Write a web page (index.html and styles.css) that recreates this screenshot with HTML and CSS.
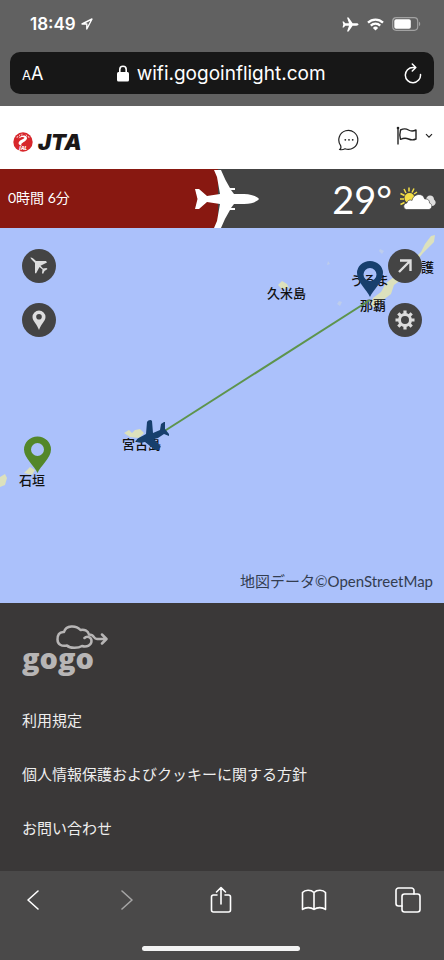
FILE: index.html
```html
<!DOCTYPE html>
<html lang="ja">
<head>
<meta charset="utf-8">
<meta name="viewport" content="width=device-width, initial-scale=1">
<title>JTA Wi-Fi</title>
<link rel="stylesheet" href="styles.css">
</head>
<body>
<div class="browser-top">
  <div class="status">
    <div class="status-group">
      <span class="clock">18:49</span>
      <svg width="12" height="12" viewBox="0 0 12 12" fill="none" stroke="#fff" stroke-width="1.4" stroke-linejoin="round"><path d="M11 1 1 6h4.800v5z"/></svg>
    </div>
    <div class="status-group status-right">
      <svg width="17" height="15" viewBox="0 0 17 15" fill="#fff"><path d="M16.500 7.500c0-.7-1-1.200-2.200-1.200H10.600L6.600.5H5l2 5.800H3.300L1.700 4.400H.5l.8 3.100-.8 3.100h1.200l1.600-1.900H7l-2 5.800h1.600l4-5.800h3.700c1.200 0 2.200-.5 2.200-1.200z"/></svg>
      <svg width="17" height="13" viewBox="0 0 17 13" fill="none" stroke="#fff" stroke-width="2.300"><path d="M1 4.600a10.800 10.800 0 0 1 15 0M3.800 7.600a6.700 6.700 0 0 1 9.400 0"/><path d="M8.500 12.500 5.900 9.900a3.700 3.700 0 0 1 5.200 0z" fill="#fff" stroke="none"/></svg>
      <svg width="29" height="14" viewBox="0 0 29 14"><rect x=".7" y=".7" width="25" height="12.600" rx="3.500" fill="none" stroke="#a2a2a2" stroke-width="1.200"/><rect x="2.300" y="2.300" width="16.500" height="9.400" rx="1.800" fill="#fff"/><path d="M27 4.800c1.600.5 1.600 3.900 0 4.400z" fill="#a2a2a2"/></svg>
    </div>
  </div>
  <div class="address">
    <button class="text-size" aria-label="文字サイズ"><span class="small-a">A</span>A</button>
    <label class="site">
      <svg width="12" height="17" viewBox="0 0 12 17"><rect y="7" width="12" height="9.500" rx="1.500" fill="#fff"/><path d="M2.800 8V4.500a3.200 3.200 0 0 1 6.400 0V8" fill="none" stroke="#fff" stroke-width="1.600"/></svg>
      <input class="url" type="text" value="wifi.gogoinflight.com" aria-label="アドレス">
    </label>
    <button class="reload" aria-label="再読み込み"><svg width="18" height="21" viewBox="0 0 18 21" fill="none" stroke="#fff" stroke-width="1.500" stroke-linecap="round" stroke-linejoin="round"><path d="M16.500 11.500A7.600 7.600 0 1 1 9 4.500h2.500M8.300 1l3.500 3.500L8.300 8"/></svg></button>
  </div>
</div>

<header class="site-header">
  <a class="brand" href="#" aria-label="JTA">
    <svg width="20" height="20" viewBox="0 0 20 20"><circle cx="10" cy="10" r="9.700" fill="#d7262b"/><path d="M7 2.500 6 4.500M9 1.700l-.3 2M13 2.500l1 2M4.500 4 4 6M15.500 4l.5 2" stroke="#fff" stroke-width=".7"/><path d="M5.500 6.500C7.500 3.200 12 2.700 13.600 5c1.500 2.300-1.200 4-3.900 5.700-1.700 1.200-1.900 2-.7 3-3.500-.3-4.500-3-2-5 2.200-1.500 4.800-1.900 4.300-3.100C10.600 4.400 7.500 5 5.500 6.500z" fill="#fff"/><text class="crest" x="10" y="17.500" text-anchor="middle">JAL</text></svg>
    <span>JTA</span>
  </a>
  <nav class="header-actions">
    <button aria-label="チャット"><svg width="22" height="22" viewBox="0 0 22 22"><path d="M1.500 20.500c1.500-.6 1.700-2.300 1-4.200A9.500 9.500 0 1 1 7 19.800c-1.700.9-3.500 1.200-5.500.7z" fill="none" stroke="#222" stroke-width="1.200" stroke-linejoin="round"/><g fill="#222"><circle cx="7.300" cy="10.800" r=".9"/><circle cx="11" cy="10.800" r=".9"/><circle cx="14.700" cy="10.800" r=".9"/></g></svg></button>
    <button class="language" aria-label="言語"><svg width="22" height="20" viewBox="0 0 22 20" fill="none" stroke="#222" stroke-width="1.400"><path d="M2 2v16.500"/><circle cx="2" cy="2" r="1.300" fill="#222" stroke="none"/><path d="M4.500 4c3-1.500 5.500-1.500 8 0s5 1.200 7.500 0v9c-2.500 1.200-5 1.200-7.500 0s-5-1-8 .3l-.7-4.300z" stroke-linejoin="round"/></svg><svg width="8" height="6" viewBox="0 0 8 6" fill="none" stroke="#222" stroke-width="1.200"><path d="m1 1.200 3 3 3-3"/></svg></button>
  </nav>
</header>

<section class="flight">
  <div class="progress"><span>0時間 6分</span>
    <svg class="plane" width="64" height="59" viewBox="0 0 64 59" fill="#fff"><path d="M64 30c-2-2.500-6-4.500-15-5H39l-3-4h4v-2h-5Q30 11 26 1h-7l3 7 3 17-13 2L4 20H0l2.500 10L0 40h4l8-7 13 2-3 17-3 7h7q4-10 9-18h5v-2h-4l3-4h10c9-.5 13-2.500 15-5z"/></svg>
  </div>
  <div class="weather">
    <span>29°</span>
    <svg width="36" height="24" viewBox="0 0 36 24"><g stroke="#f4df45" stroke-width="1.500"><path d="M9 .5v4M4 2l2 4M.5 6.500l4 2M0 12h4M.5 17.500l4-2M14 1.500l-2 4M17 5l-3 2"/></g><circle cx="9.500" cy="11" r="5" fill="#f4df45"/><path d="M26 13c0-2.800 2-4.500 4-4.500 2.400 0 4 1.600 4 4 2.600 2 2 5.500-1 6.500h-5z" fill="#ddd"/><path d="M6.500 22.500c-4-1-3.500-6 .5-6.600.5-2.900 3.400-3.400 5-2.400C13.200 6.500 22.800 5 24.700 12c3.800-.4 5 2 4.700 4 3.300 1 3.200 5.700-.4 6.500z" fill="#fff" stroke="#444" stroke-width=".7"/></svg>
  </div>
</section>

<main class="map">
  <svg class="chart" viewBox="0 0 444 375" preserveAspectRatio="xMidYMin slice">
    <g class="land">
      <path d="M435 7l-1 7-11 11-8 10-10 14-11 8-3 9-8 6-8 7h-5l3-9 8-6 5-9 12-9 10-9 13-13 4-8 6-8z"/>
      <path d="M278 57l4-4 5 3 2 4-7 1zM124 205l5-3 3 3 3-3 5-1 4 4-5 5-9-1zM24 245l6-6 5 3-3 5zM0 249l5-3 2 4-2 7-5 2z"/>
      <path class="shoal" d="M339 73l3 1-2 4-3-2zM380 21l4 2-2 3-3-3zM328 33l2 3-3 1z"/>
    </g>
    <g class="place">
      <text x="267" y="70">久米島</text><text x="350" y="57">うるま</text><text x="360" y="82">那覇</text><text x="421" y="44">護</text><text x="122" y="221">宮古島</text><text x="19" y="257">石垣</text>
    </g>
    <path d="M152 211 370 72" stroke="#5d944c" stroke-width="2"/>
    <path class="pin-from" fill-rule="evenodd" d="M370 69c-3-7-13-15-13-24a13 12 0 0 1 26 0c0 9-10 17-13 24zM370 40a6.500 6.500 0 1 0 0 13 6.500 6.500 0 0 0 0-13z"/>
    <path class="pin-to" fill-rule="evenodd" d="M37.500 245c-3-7-13.500-15-13.500-23.500a13.500 13 0 0 1 27 0C51 230 40.500 238 37.500 245zM37.500 215a6.500 6.500 0 1 0 0 13 6.500 6.500 0 0 0 0-13z"/>
    <path class="pin-from" d="M136 213c1-3 5-4 10-7l1-12c1-2 4-3 5-1l1 12 7-3 1-6 3-2h1v7l4 5v2l-5-2-6 4-4 1 7 8-2 1v2h-4l-10-8c-4 1-8 1-9-1z"/>
  </svg>
  <div class="map-tools map-tools-left">
    <button aria-label="飛行機"><svg width="20" height="20" viewBox="0 0 20 20"><path d="M1.500 1.500C2.500 1 5 3 7 5h10l1 1.500-6.500 3.200 2.500 2.800 3.500-.5 1 1-3 2-1.500 3-1-1 .5-3.500-3-2.500L7 17.500l-1-.5V7C4.500 5 1.300 2.500 1.500 1.500z" fill="#ddd"/></svg></button>
    <button aria-label="現在地"><svg width="14" height="20" viewBox="0 0 14 20"><path d="M7 20C5 14 .5 11 .5 7a6.500 6.500 0 0 1 13 0c0 4-4.500 7-6.500 13zM7 4a2.800 2.800 0 1 0 0 5.600A2.800 2.800 0 0 0 7 4z" fill="#ddd" fill-rule="evenodd"/></svg></button>
  </div>
  <div class="map-tools map-tools-right">
    <button aria-label="拡大"><svg width="16" height="16" viewBox="0 0 16 16" fill="none" stroke="#ddd" stroke-width="2.400"><path d="M3 2.500h10.500V13M13.500 2.500 2 14"/></svg></button>
    <button aria-label="設定"><svg width="20" height="20" viewBox="0 0 20 20" fill="none" stroke="#ddd"><circle cx="10" cy="10" r="5.500" stroke-width="3"/><path d="M10 .5V4M10 16v3.500M.5 10H4M16 10h3.500M3.300 3.300l2.500 2.500M14.200 14.200l2.500 2.500M3.300 16.700l2.500-2.500M14.200 5.800l2.500-2.500" stroke-width="3.200"/></svg></button>
  </div>
  <p class="credit">地図データ©OpenStreetMap</p>
</main>

<footer class="site-footer">
  <a class="gogo" href="#" aria-label="gogo">
    <svg width="88" height="58" viewBox="0 0 88 58"><g fill="none" stroke="#b7b5b5" stroke-width="2.500" stroke-linecap="round" stroke-linejoin="round"><path d="M84 14h-9c-4 0-2-4.500-8-4.500-1-4-5-5.500-8.500-4.500C54 0 44 0 42 7c-5-.5-6.500 3.500-6.500 7.500 0 5 4 7 9.500 6 3 3 11 3 15 .5 5 1.500 9.500-1 9.500-5s-4.500-5.500-7-3M80 9.500l4.500 4.500-4.500 4.500"/></g><text class="wordmark" x="0" y="44">gogo</text></svg>
  </a>
  <nav class="links"><a href="#">利用規定</a><a href="#">個人情報保護およびクッキーに関する方針</a><a href="#">お問い合わせ</a></nav>
</footer>

<div class="browser-bottom">
  <div class="toolbar">
    <button aria-label="戻る"><svg width="14" height="22" viewBox="0 0 14 22"><path d="M12 2 2 11l10 9"/></svg></button>
    <button class="inactive" aria-label="進む" disabled><svg width="14" height="22" viewBox="0 0 14 22"><path d="m2 2 10 9-10 9"/></svg></button>
    <button aria-label="共有"><svg width="22" height="28" viewBox="0 0 22 28"><path d="M7 9H3.500a2 2 0 0 0-2 2v13a2 2 0 0 0 2 2h15a2 2 0 0 0 2-2V11a2 2 0 0 0-2-2H15M11 18V2M6.500 6 11 1.500 15.500 6"/></svg></button>
    <button aria-label="ブックマーク"><svg width="26" height="22" viewBox="0 0 26 22"><path d="M13 3.500v17M13 3.500C10 .5 4 .5 1.500 3.500v17c3-2.500 8.500-2.500 11.500 0 3-2.500 8.500-2.500 11.500 0v-17c-2.500-3-8.500-3-11.500 0z"/></svg></button>
    <button aria-label="タブ"><svg width="26" height="26" viewBox="0 0 26 26"><rect x="7" y="7" width="18" height="18" rx="2.500"/><path d="M7 19H3.500A2.500 2.500 0 0 1 1 16.500v-13A2.500 2.500 0 0 1 3.500 1h13A2.500 2.500 0 0 1 19 3.500V7"/></svg></button>
  </div>
  <div class="home-bar"></div>
</div>
</body>
</html>
```
FILE: styles.css
```css
* { box-sizing: border-box; }
body {
  margin: 0;
  min-height: 100vh;
  display: flex;
  flex-direction: column;
  background: #3a3838;
  color: #fff;
  font-family: Lato, "Noto Sans CJK JP", sans-serif;
}
button { display: flex; align-items: center; justify-content: center; border: 0; padding: 0; background: none; color: inherit; font: inherit; }
a { color: inherit; text-decoration: none; }
svg { display: block; flex: none; }

.browser-top { background: #616161; padding: 12px 10px; font-family: Inter, sans-serif; }
.status { display: flex; justify-content: space-between; height: 24px; padding: 0 13px 0 20px; }
.status-group { display: flex; align-items: center; gap: 5px; }
.status-right { gap: 8px; }
.clock { font-size: 17px; font-weight: 600; }
.address { display: flex; align-items: center; justify-content: space-between; height: 42px; margin-top: 16px; padding: 0 12px; border-radius: 10px; background: #171717; }
.text-size { align-items: baseline; font-size: 18px; }
.small-a { font-size: 13px; }
.site { display: flex; align-items: center; gap: 8px; }
.url { width: 194px; border: 0; padding: 0; outline: 0; background: none; color: #fff; font: 19px Inter, sans-serif; }

.site-header { display: flex; align-items: center; justify-content: space-between; height: 63px; padding: 0 11px 0 13px; background: #fff; color: #1b1717; }
.brand { display: flex; align-items: center; gap: 5px; padding-top: 8px; font: italic 900 22px/20px Inter, sans-serif; }
.crest { font: italic 800 5px "Open Sans", sans-serif; fill: #fff; }
.header-actions { display: flex; align-items: center; gap: 36px; }
.header-actions button { padding-top: 4px; }
.header-actions .language { gap: 7px; padding: 0 0 4px; }

.flight { display: flex; height: 59px; background: #444; }
.progress { position: relative; display: flex; align-items: center; width: 49%; padding-left: 8px; background: #881811; font-size: 14px; }
.progress span { padding-bottom: 4px; }
.plane { position: absolute; right: -41px; top: 0; }
.weather { display: flex; flex: 1; align-items: center; justify-content: flex-end; gap: 8px; padding-right: 8px; font-size: 38px; }

.map { position: relative; height: 375px; overflow: hidden; background: #abc1fb; }
.chart { width: 100%; height: 100%; }
.land { fill: #dce1bd; }
.shoal { fill: #bdcdec; }
.place { font: 500 13px "Noto Sans CJK JP", sans-serif; fill: #111; }
.pin-from { fill: #173f6d; }
.pin-to { fill: #53872a; }
.map-tools { position: absolute; top: 21px; display: flex; flex-direction: column; gap: 20px; }
.map-tools-left { left: 22px; }
.map-tools-right { right: 22px; }
.map-tools button { width: 34px; height: 34px; border-radius: 50%; background: #444; }
.credit { position: absolute; right: 11px; bottom: 10px; margin: 0; color: #333d50; font-size: 15px; line-height: 24px; }

.site-footer { flex: 1; padding: 22px; }
.gogo { display: block; }
.wordmark { font: 800 29px "Open Sans", sans-serif; fill: #b7b5b5; }
.links { display: flex; flex-direction: column; gap: 30px; margin-top: 25px; color: #eee; font-size: 15px; line-height: 24px; }

.browser-bottom { padding: 14px 23px 9px 20px; background: #4a4949; }
.toolbar { display: flex; align-items: center; justify-content: space-between; height: 30px; }
.toolbar button { width: 26px; height: 30px; }
.toolbar svg { fill: none; stroke: #fff; stroke-width: 1.6; stroke-linecap: round; stroke-linejoin: round; }
.toolbar .inactive { opacity: .5; }
.home-bar { width: 158px; height: 5px; margin: 31px auto 0; border-radius: 3px; background: #f3f3f3; }
```
